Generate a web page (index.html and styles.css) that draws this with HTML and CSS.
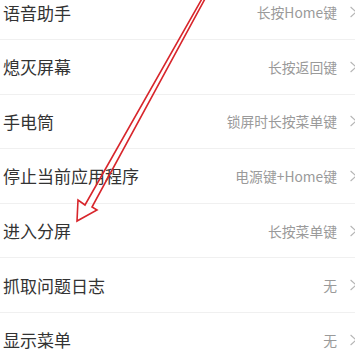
FILE: index.html
```html
<!DOCTYPE html>
<html lang="zh-CN">
<head>
<meta charset="utf-8">
<title>按键设置</title>
<link rel="stylesheet" href="styles.css">
</head>
<body>
<div class="page">
  <ul class="list">
    <li class="row"><span class="label">语音助手</span><span class="value">长按Home键</span><svg class="chev" viewBox="0 0 5 12" width="5" height="12"><path d="M0.6 1 L6 6 L0.6 11"/></svg></li>
    <li class="row"><span class="label">熄灭屏幕</span><span class="value">长按返回键</span><svg class="chev" viewBox="0 0 5 12" width="5" height="12"><path d="M0.6 1 L6 6 L0.6 11"/></svg></li>
    <li class="row"><span class="label">手电筒</span><span class="value">锁屏时长按菜单键</span><svg class="chev" viewBox="0 0 5 12" width="5" height="12"><path d="M0.6 1 L6 6 L0.6 11"/></svg></li>
    <li class="row"><span class="label">停止当前应用程序</span><span class="value">电源键+Home键</span><svg class="chev" viewBox="0 0 5 12" width="5" height="12"><path d="M0.6 1 L6 6 L0.6 11"/></svg></li>
    <li class="row"><span class="label">进入分屏</span><span class="value">长按菜单键</span><svg class="chev" viewBox="0 0 5 12" width="5" height="12"><path d="M0.6 1 L6 6 L0.6 11"/></svg></li>
    <li class="row"><span class="label">抓取问题日志</span><span class="value">无</span><svg class="chev" viewBox="0 0 5 12" width="5" height="12"><path d="M0.6 1 L6 6 L0.6 11"/></svg></li>
    <li class="row"><span class="label">显示菜单</span><span class="value">无</span><svg class="chev" viewBox="0 0 5 12" width="5" height="12"><path d="M0.6 1 L6 6 L0.6 11"/></svg></li>
  </ul>
  <svg class="arrow" viewBox="0 0 355 358" width="355" height="358">
    <path d="M203 -3 L85 205 L78 200 L77 221 L97 210 L92 207 L206 -3"/>
  </svg>
</div>
</body>
</html>
```

FILE: styles.css
```css
html, body {
  margin: 0;
  padding: 0;
  background: #ffffff;
}

body {
  width: 355px;
  height: 358px;
  overflow: hidden;
  font-family: "Noto Sans CJK SC", "Noto Sans", sans-serif;
}

.page {
  position: relative;
  width: 355px;
  height: 358px;
  overflow: hidden;
}

.list {
  list-style: none;
  margin: -14.6px 0 0 0;
  padding: 0;
}

.row {
  display: flex;
  align-items: center;
  height: 53.6px;
  border-bottom: 1px solid #f0f0f0;
  padding-left: 3px;
}

.label {
  flex: 1;
  font-size: 17px;
  color: #333333;
  white-space: nowrap;
}

.value {
  font-size: 13.8px;
  color: #9a9a9a;
  white-space: nowrap;
}

.chev {
  flex: none;
  margin-left: 13px;
}

.chev path {
  fill: none;
  stroke: #b5b5b5;
  stroke-width: 1.1;
}

.arrow {
  position: absolute;
  left: 0;
  top: 0;
  pointer-events: none;
}

.arrow path {
  fill: none;
  stroke: #d8262c;
  stroke-width: 1.6;
  stroke-linejoin: miter;
}
```
